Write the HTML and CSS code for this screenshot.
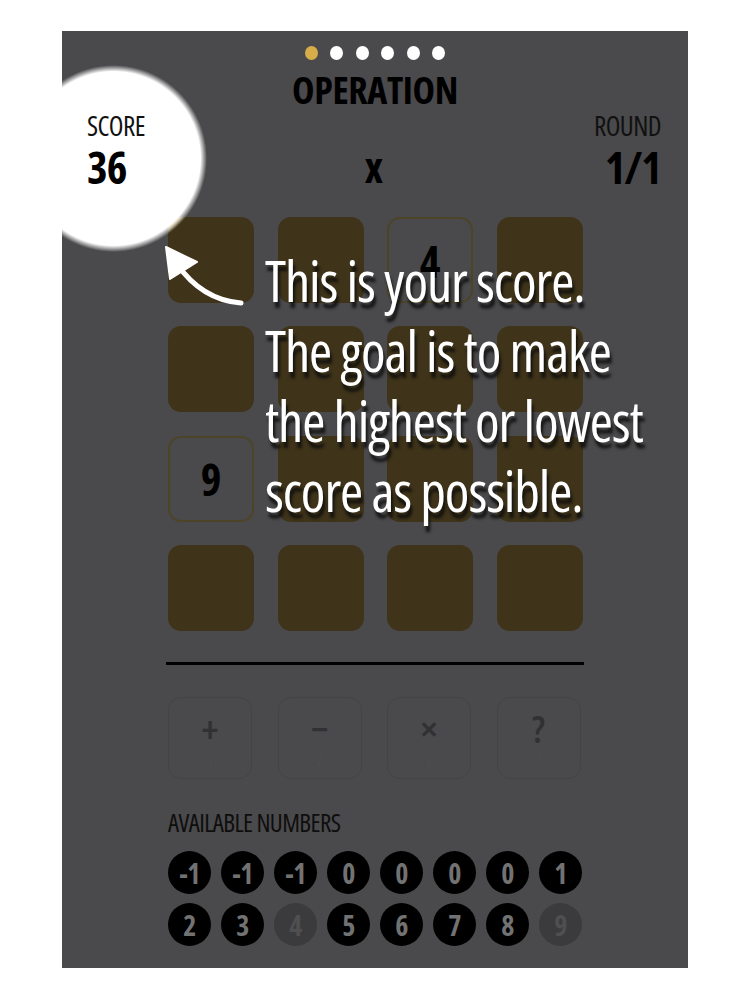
FILE: index.html
```html
<!DOCTYPE html>
<html lang="en">
<head>
<meta charset="utf-8">
<title>Operation – tutorial</title>
<link rel="stylesheet" href="styles.css">
</head>
<body>
<div class="screen">
  <div class="spot"></div>

  <div class="dots">
    <span class="dot active"></span>
    <span class="dot"></span>
    <span class="dot"></span>
    <span class="dot"></span>
    <span class="dot"></span>
    <span class="dot"></span>
  </div>

  <h1 class="title">OPERATION</h1>

  <div class="stats">
    <div class="stat">
      <div class="stat-label">SCORE</div>
      <div class="stat-value">36</div>
    </div>
    <div class="op-sign">x</div>
    <div class="stat stat-right">
      <div class="stat-label">ROUND</div>
      <div class="stat-value">1/1</div>
    </div>
  </div>

  <div class="board">
    <div class="tile tile-first"></div>
    <div class="tile"></div>
    <div class="tile tile-placed tile-top"><span>4</span></div>
    <div class="tile"></div>

    <div class="tile"></div>
    <div class="tile"></div>
    <div class="tile"></div>
    <div class="tile"></div>

    <div class="tile tile-placed"><span>9</span></div>
    <div class="tile"></div>
    <div class="tile"></div>
    <div class="tile"></div>

    <div class="tile"></div>
    <div class="tile"></div>
    <div class="tile"></div>
    <div class="tile"></div>
  </div>

  <div class="rule"></div>

  <div class="ops">
    <div class="op"><span class="op-sym">+</span><span class="op-sub">1</span></div>
    <div class="op"><span class="op-sym">&minus;</span><span class="op-sub">2</span></div>
    <div class="op"><span class="op-sym">&times;</span><span class="op-sub">3</span></div>
    <div class="op"><span class="op-sym">?</span><span class="op-sub">?</span></div>
  </div>

  <div class="avail-label">AVAILABLE NUMBERS</div>
  <div class="numbers">
    <span class="num">-1</span>
    <span class="num">-1</span>
    <span class="num">-1</span>
    <span class="num">0</span>
    <span class="num">0</span>
    <span class="num">0</span>
    <span class="num">0</span>
    <span class="num">1</span>
    <span class="num">2</span>
    <span class="num">3</span>
    <span class="num num-used">4</span>
    <span class="num">5</span>
    <span class="num">6</span>
    <span class="num">7</span>
    <span class="num">8</span>
    <span class="num num-used">9</span>
  </div>

  <svg class="arrow" width="90" height="70" viewBox="0 0 90 70" aria-hidden="true">
    <path d="M81 63 Q 42 60 17 24" fill="none" stroke="#ffffff" stroke-width="5" stroke-linecap="round"/>
    <path d="M6 7 L37 22 L10 39 Z" fill="#ffffff" stroke="#ffffff" stroke-width="2" stroke-linejoin="round"/>
  </svg>

  <p class="tip">This is your score.<br>The goal is to make<br>the highest or lowest<br>score as possible.</p>
</div>
</body>
</html>
```
FILE: styles.css
```css
html, body {
  margin: 0;
  padding: 0;
  background: #ffffff;
}

body {
  font-family: "Open Sans", "Noto Sans", sans-serif;
  font-stretch: 75%;
}

.screen {
  position: relative;
  overflow: hidden;
  margin: 31px 0 0 62px;
  width: 626px;
  height: 937px;
  background: #4a494b;
  display: flex;
  flex-direction: column;
}

/* spotlight around the score */
.spot {
  position: absolute;
  left: -42px;
  top: 34px;
  width: 187px;
  height: 187px;
  border-radius: 50%;
  background: radial-gradient(circle closest-side, #ffffff 93%, rgba(255, 255, 255, 0) 100%);
  z-index: 0;
}

.dots {
  display: flex;
  justify-content: center;
  gap: 12.6px;
  margin-top: 15px;
  position: relative;
  z-index: 1;
}

.dot {
  width: 13px;
  height: 14px;
  border-radius: 50%;
  background: #ffffff;
}

.dot.active {
  background: #d7ad49;
}

.title {
  margin: 10px 0 0;
  text-align: center;
  font-size: 38px;
  line-height: 38px;
  font-weight: 700;
  color: #000000;
  letter-spacing: -0.4px;
  position: relative;
  z-index: 1;
}

.stats {
  position: relative;
  z-index: 1;
  display: grid;
  grid-template-columns: 1fr auto 1fr;
  align-items: end;
  margin-top: 4px;
  padding: 0 27px 0 25px;
}

.stat-label {
  font-size: 27px;
  line-height: 27px;
  color: #111111;
  letter-spacing: -0.6px;
}

.stat-value {
  margin-top: 6px;
  font-size: 44px;
  line-height: 44px;
  font-weight: 700;
  color: #000000;
  letter-spacing: -1px;
}

.stat-right {
  text-align: right;
}

.op-sign {
  font-size: 42px;
  line-height: 44px;
  font-weight: 700;
  color: #000000;
}

.board {
  display: grid;
  grid-template-columns: repeat(4, 86px);
  grid-auto-rows: 86px;
  column-gap: 23.6px;
  row-gap: 23.4px;
  margin: 28px 0 0 106px;
}

.tile {
  border-radius: 13px;
  background: #3f341a;
  display: flex;
  align-items: center;
  justify-content: center;
  font-size: 44px;
  font-weight: 700;
  color: #000000;
}

.tile-first {
  background: radial-gradient(circle at -55px -59px, #d6ad4b 87px, #3f341a 93px);
}

.tile-placed {
  background: transparent;
  border: 2px solid #4d4427;
}

.tile-top {
  align-items: flex-start;
}

.tile-top span {
  margin-top: 12px;
}

.rule {
  margin: 31px 0 0 104px;
  width: 418px;
  height: 3px;
  background: #000000;
}

.ops {
  display: grid;
  grid-template-columns: repeat(4, 84px);
  column-gap: 25.5px;
  margin: 32px 0 0 106px;
}

.op {
  height: 80px;
  border: 1.5px solid #444345;
  border-radius: 13px;
  display: flex;
  flex-direction: column;
  align-items: center;
  color: #313032;
}

.op-sym {
  margin-top: 10px;
  font-size: 38px;
  line-height: 40px;
  font-weight: 600;
}

.op-sub {
  margin-top: 6px;
  font-size: 12px;
  line-height: 14px;
  color: #4f4e50;
}

.avail-label {
  margin: 31px 0 0 106px;
  font-size: 25px;
  line-height: 25px;
  color: #0e0e0e;
  letter-spacing: -0.6px;
}

.numbers {
  display: grid;
  grid-template-columns: repeat(8, 43px);
  grid-auto-rows: 43px;
  column-gap: 10px;
  row-gap: 9px;
  margin: 16px 0 0 106px;
}

.num {
  border-radius: 50%;
  background: #000000;
  color: #727272;
  display: flex;
  align-items: center;
  justify-content: center;
  font-size: 28px;
  font-weight: 700;
  letter-spacing: -0.5px;
}

.num-used {
  background: #3b3a3c;
  color: #4f4e50;
}

.arrow {
  position: absolute;
  left: 98px;
  top: 209px;
  z-index: 2;
}

.tip {
  position: absolute;
  left: 203px;
  top: 214px;
  margin: 0;
  z-index: 2;
  font-size: 56px;
  line-height: 70px;
  letter-spacing: -1.1px;
  color: #ffffff;
  white-space: nowrap;
  text-shadow: 2px 6px 3px rgba(12, 12, 12, 0.85);
}
```
